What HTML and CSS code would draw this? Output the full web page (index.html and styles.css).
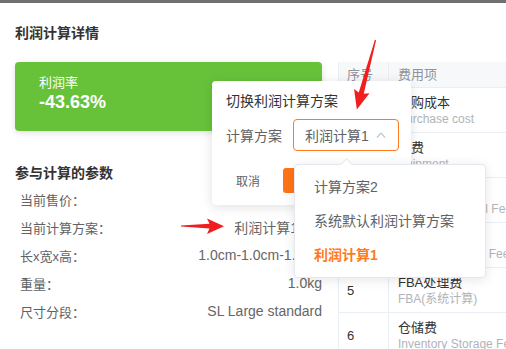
FILE: index.html
```html
<!DOCTYPE html>
<html lang="zh-CN">
<head>
    <meta charset="UTF-8">
    <meta name="viewport" content="width=device-width, initial-scale=1.0">
    <title>利润计算详情</title>
    <link rel="stylesheet" href="styles.css">
</head>
<body>
    <div class="topbar"></div>
    <div class="page">
        <h2 class="page-title">利润计算详情</h2>
        <div class="layout">
            <div class="left">
                <div class="rate-card">
                    <div class="rate-label">利润率</div>
                    <div class="rate-value">-43.63%</div>
                </div>

                <h3 class="params-title">参与计算的参数</h3>
                <div class="param-row"><span>当前售价：</span><span class="param-value">9.99</span></div>
                <div class="param-row"><span>当前计算方案：</span><span class="param-value">利润计算1<a class="switch-link">切换</a></span></div>
                <div class="param-row"><span>长x宽x高：</span><span class="param-value">1.0cm-1.0cm-1.0cm</span></div>
                <div class="param-row"><span>重量：</span><span class="param-value">1.0kg</span></div>
                <div class="param-row"><span>尺寸分段：</span><span class="param-value">SL Large standard</span></div>
            </div>

            <div class="cost-table">
                <div class="cost-head">
                    <div class="cell-no">序号</div>
                    <div class="cell-name">费用项</div>
                </div>
                <div class="cost-row">
                    <div class="cell-no">1</div>
                    <div class="cell-name"><div class="name-main">采购成本</div><div class="name-sub">Purchase cost</div></div>
                </div>
                <div class="cost-row">
                    <div class="cell-no">2</div>
                    <div class="cell-name"><div class="name-main">运费</div><div class="name-sub">Shipment</div></div>
                </div>
                <div class="cost-row">
                    <div class="cell-no">3</div>
                    <div class="cell-name"><div class="name-main">亚马逊佣金</div><div class="name-sub">Amazon Referral Fee</div></div>
                </div>
                <div class="cost-row">
                    <div class="cell-no">4</div>
                    <div class="cell-name"><div class="name-main">交易手续费</div><div class="name-sub">Amazon Closing Fee</div></div>
                </div>
                <div class="cost-row">
                    <div class="cell-no">5</div>
                    <div class="cell-name"><div class="name-main">FBA处理费</div><div class="name-sub">FBA(系统计算)</div></div>
                </div>
                <div class="cost-row">
                    <div class="cell-no">6</div>
                    <div class="cell-name"><div class="name-main">仓储费</div><div class="name-sub">Inventory Storage Fee</div></div>
                </div>
            </div>
        </div>
    </div>

    <!-- Popover: Berechnungsschema wechseln -->
    <div class="popover">
        <div class="popover-title">切换利润计算方案</div>
        <div class="scheme-row">
            <span class="scheme-label">计算方案</span>
            <div class="select">
                <span>利润计算1</span>
                <svg width="10" height="6" viewBox="0 0 10 6"><polyline points="1,5.5 5,1.2 9,5.5" fill="none" stroke="#c0c4cc" stroke-width="1.2"/></svg>
            </div>
        </div>
        <div class="popover-actions">
            <button class="btn-cancel">取消</button>
            <button class="btn-ok">确定</button>
        </div>
    </div>

    <div class="dropdown">
        <div class="dropdown-item">计算方案2</div>
        <div class="dropdown-item">系统默认利润计算方案</div>
        <div class="dropdown-item active">利润计算1</div>
    </div>

    <!-- rote Markierungspfeile -->
    <svg class="annotations" width="506" height="349" viewBox="0 0 506 349">
        <polygon points="181,225.6 181,226.6 209.5,228.6 207,234 224,226.2 207,218.6 209.5,223.8" fill="#f01e1e"/>
        <g transform="translate(375.5,40) rotate(15)">
            <polygon points="-0.6,0 0.6,0 2.6,55 8,53 0,72 -8,53 -2.6,55" fill="#f01e1e"/>
        </g>
    </svg>
</body>
</html>
```

FILE: styles.css
```css
/* Allgemeines Styling */
body {
    margin: 0;
    width: 506px;
    height: 349px;
    overflow: hidden;
    position: relative;
    background: #fff;
    color: #333;
    font-family: "Liberation Sans", "Noto Sans CJK SC", sans-serif;
}
.topbar {
    height: 3px;
    background: #707070;
}
.page {
    padding-left: 15px;
}
.page-title {
    margin: 20px 0 0;
    font-size: 14px;
    line-height: 20px;
    font-weight: bold;
    color: #333;
}
.layout {
    display: flex;
    gap: 16px;
    margin-top: 19px;
}
.left {
    flex: none;
    width: 307px;
}
.rate-card {
    height: 69px;
    box-sizing: border-box;
    padding: 13px 24px 0;
    background: #67c23a;
    border-radius: 4px;
    color: #fff;
    box-shadow: 0 2px 6px rgba(0, 0, 0, 0.12);
}
.rate-label {
    font-size: 13px;
    line-height: 16px;
}
.rate-value {
    font-size: 18px;
    line-height: 22px;
    font-weight: bold;
}
.params-title {
    margin: 32px 0 2px;
    font-size: 14px;
    line-height: 20px;
    font-weight: bold;
    color: #333;
}
.param-row {
    display: flex;
    justify-content: space-between;
    align-items: center;
    height: 28px;
    padding-left: 5px;
    font-size: 13px;
    color: #606266;
    white-space: nowrap;
}
.param-value {
    font-size: 14px;
    color: #666;
}
.switch-link {
    margin-left: 0;
    font-size: 12px;
    color: #ff7a1a;
}

/* Kostentabelle */
.cost-table {
    flex: none;
    width: 260px;
    border-left: 1px solid #ebeef5;
    font-size: 13px;
}
.cost-head,
.cost-row {
    display: grid;
    grid-template-columns: 49px 1fr;
    box-sizing: border-box;
    border-bottom: 1px solid #ebeef5;
}
.cost-head {
    height: 26px;
    background: #f7f8fa;
    color: #909399;
    line-height: 25px;
}
.cost-head .cell-no {
    padding-left: 8px;
}
.cost-head .cell-name {
    padding-left: 9px;
    border-left: 1px solid #ebeef5;
}
.cost-row {
    height: 45px;
}
.cost-row .cell-no {
    display: flex;
    align-items: center;
    padding-left: 8px;
    color: #333;
}
.cost-row .cell-name {
    padding: 6px 0 0 9px;
    border-left: 1px solid #ebeef5;
    white-space: nowrap;
}
.name-main {
    font-size: 13px;
    line-height: 17px;
    color: #333;
}
.name-sub {
    font-size: 12px;
    line-height: 17px;
    color: #b1b3b8;
}

/* Popover */
.popover {
    position: absolute;
    left: 212px;
    top: 81px;
    width: 199px;
    height: 124px;
    box-sizing: border-box;
    padding: 10px 12px 0 14px;
    background: #fff;
    border-radius: 4px;
    box-shadow: 0 2px 12px rgba(0, 0, 0, 0.12);
}
.popover-title {
    font-size: 14px;
    line-height: 20px;
    color: #333;
    white-space: nowrap;
}
.scheme-row {
    display: flex;
    align-items: center;
    gap: 11px;
    margin-top: 8px;
}
.scheme-label {
    flex: none;
    font-size: 14px;
    color: #606266;
    white-space: nowrap;
}
.select {
    flex: none;
    display: flex;
    align-items: center;
    justify-content: space-between;
    width: 106px;
    height: 32px;
    box-sizing: border-box;
    padding: 0 12px 0 11px;
    border: 1px solid #ff7a1a;
    border-radius: 4px;
    font-size: 14px;
    color: #606266;
    white-space: nowrap;
}
.popover-actions {
    display: flex;
    align-items: center;
    gap: 13px;
    margin-top: 17px;
}
.btn-cancel,
.btn-ok {
    height: 25px;
    border: none;
    font-family: inherit;
    font-size: 12px;
    padding: 0 10px;
}
.btn-cancel {
    background: none;
    color: #606266;
}
.btn-ok {
    padding: 0 15px;
    background: #ff7416;
    color: #fff;
    border-radius: 3px;
}

/* Dropdown */
.dropdown {
    position: absolute;
    left: 294px;
    top: 164px;
    width: 192px;
    height: 114px;
    box-sizing: border-box;
    padding: 5px 0;
    background: #fff;
    border: 1px solid #e4e7ed;
    border-radius: 4px;
    box-shadow: 0 2px 12px rgba(0, 0, 0, 0.1);
}
.dropdown::before {
    content: "";
    position: absolute;
    left: 47px;
    top: -5px;
    width: 8px;
    height: 8px;
    background: #fff;
    border-top: 1px solid #e4e7ed;
    border-left: 1px solid #e4e7ed;
    transform: rotate(45deg);
}
.dropdown-item {
    height: 34px;
    line-height: 34px;
    padding-left: 19px;
    font-size: 14px;
    color: #606266;
    white-space: nowrap;
}
.dropdown-item.active {
    color: #ff7a1a;
    font-weight: bold;
}

.annotations {
    position: absolute;
    left: 0;
    top: 0;
    pointer-events: none;
}
```
